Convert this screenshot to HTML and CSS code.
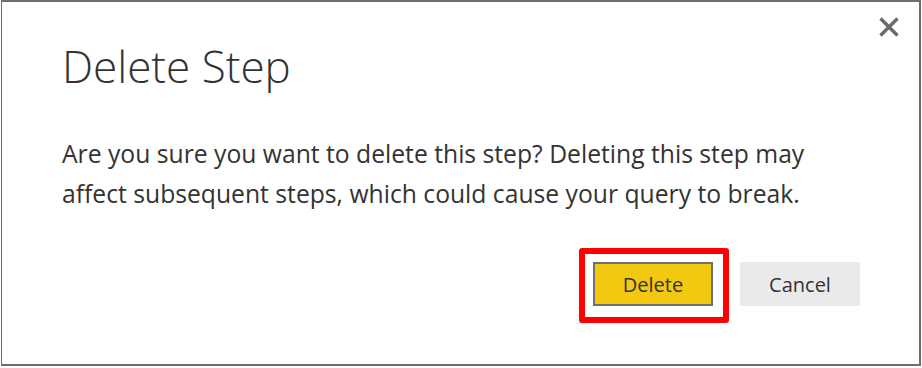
FILE: index.html
```html
<!DOCTYPE html>
<html lang="en">
<head>
    <meta charset="UTF-8">
    <title>Delete Step</title>
    <link rel="stylesheet" href="styles.css">
</head>
<body>
    <div class="dialog">
        <button class="close-button" aria-label="Close">
            <svg width="20" height="20" viewBox="0 0 20 20">
                <path d="M1.5 1.5 L18.5 18.5 M18.5 1.5 L1.5 18.5" stroke="#6b6b6b" stroke-width="3.4" fill="none"/>
            </svg>
        </button>
        <h1 class="title">Delete Step</h1>
        <p class="message">Are you sure you want to delete this step? Deleting this step may affect subsequent steps, which could cause your query to break.</p>
        <div class="actions">
            <div class="highlight">
                <button class="btn btn-primary">Delete</button>
            </div>
            <button class="btn btn-secondary">Cancel</button>
        </div>
    </div>
</body>
</html>
```

FILE: styles.css
```css
body {
    margin: 0;
    background: #fff;
    font-family: 'Open Sans', 'Noto Sans', sans-serif;
    color: #333;
    width: 922px;
    height: 368px;
    overflow: hidden;
}
.dialog {
    position: relative;
    box-sizing: border-box;
    width: 920px;
    height: 366px;
    margin-left: 1px;
    background: #fff;
    border: 2px solid #6e6e6e;
    border-left-width: 1px;
    padding: 36px 0 0 60px;
}
.close-button {
    position: absolute;
    top: 15px;
    right: 20px;
    width: 20px;
    height: 20px;
    padding: 0;
    border: none;
    background: none;
}
.title {
    margin: 0;
    font-size: 44px;
    font-weight: 300;
    line-height: 56px;
    color: #333;
}
.message {
    margin: 40px 0 0;
    width: 760px;
    font-size: 24.7px;
    line-height: 40px;
    color: #333;
}
.actions {
    display: flex;
    align-items: flex-start;
    justify-content: flex-end;
    gap: 11px;
    margin: 34px 59px 0 0;
}
.highlight {
    border: 6px solid #ff0000;
    border-radius: 3px;
    padding: 8px 10px 11px 8px;
}
.btn {
    width: 120px;
    height: 44px;
    font-family: 'Open Sans', 'Noto Sans', sans-serif;
    font-size: 20px;
    color: #333;
    border: none;
    padding: 0;
}
.btn-primary {
    background: #f2c811;
    border: 2px solid #707070;
}
.btn-secondary {
    margin-top: 14px;
    background: #eaeaea;
}
```
